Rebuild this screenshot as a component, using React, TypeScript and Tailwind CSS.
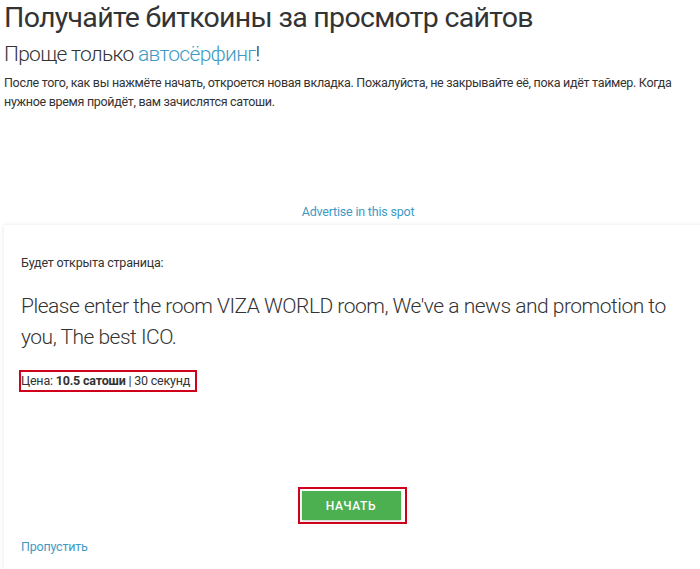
export default function App() {
  return (
    <div className="w-[700px] h-[569px] overflow-hidden bg-white text-[#333] font-['Roboto',sans-serif]">
      <div className="pl-[4px]">
        <h1 className="text-[28.5px] leading-[36px] tracking-[-0.7px]">Получайте биткоины за просмотр сайтов</h1>
        <h2 className="text-[21px] leading-[28px] font-light tracking-[-0.7px] mt-[4px]">
          Проще только <span className="text-[#3e9ac4]">автосёрфинг</span>!
        </h2>
        <p className="text-[12.5px] leading-[19px] tracking-[-0.3px] mt-[5px] pr-[20px]">
          После того, как вы нажмёте начать, откроется новая вкладка. Пожалуйста, не закрывайте её, пока идёт таймер. Когда нужное время пройдёт, вам зачислятся сатоши.
        </p>
      </div>
      <div className="mt-[91px] text-center pl-[16px] leading-[18px]">
        <a className="text-[12.5px] text-[#3e9ac4] tracking-[-0.2px]">Advertise in this spot</a>
      </div>
      <div className="mt-[4px] ml-[4px] w-[720px] h-[400px] bg-white shadow-[0_0_4px_rgba(0,0,0,0.1)] pl-[17px] pt-[29px]">
        <div className="text-[12.5px] leading-[18px] tracking-[-0.2px]">Будет открыта страница:</div>
        <div className="mt-[19px] w-[660px] text-[21px] leading-[31px] font-light tracking-[-0.5px]">
          Please enter the room VIZA WORLD room, We've a news and promotion to you, The best ICO.
        </div>
        <div className="mt-[17px] ml-[-2px] inline-block border-2 border-[#d0021b] py-[1px] pr-[5px] text-[12.5px] leading-[16px] tracking-[-0.2px]">
          Цена: <b className="font-bold">10.5 сатоши</b> | 30 секунд
        </div>
        <div className="w-[662px] flex justify-center mt-[95px]">
          <div className="border-2 border-[#d0021b] p-[2px] pr-[4px]">
            <button className="block w-[99px] h-[29px] bg-[#4caf50] text-white text-[12px] font-medium tracking-[0.6px] shadow-[0_1px_2px_rgba(0,0,0,0.2)]">
              НАЧАТЬ
            </button>
          </div>
        </div>
        <div className="mt-[13px] leading-[18px]">
          <a className="text-[12.5px] text-[#3e9ac4] tracking-[-0.2px]">Пропустить</a>
        </div>
      </div>
    </div>
  );
}
